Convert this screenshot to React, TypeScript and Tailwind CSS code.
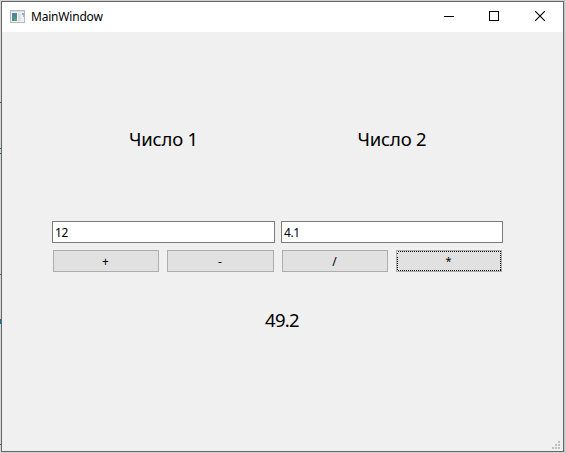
import type { ReactNode } from "react";

function AppIcon() {
  return (
    <svg width="15" height="13" viewBox="0 0 15 13" shapeRendering="crispEdges">
      <rect width="15" height="13" fill="#b4b8bf" />
      <rect x="1" y="1" width="13" height="1" fill="#d8dbe0" />
      <rect x="1" y="2" width="13" height="10" fill="#f1f1f1" />
      <rect x="2" y="3" width="5" height="8" fill="#4a8f94" />
      <rect x="2" y="3" width="3" height="3" fill="#4f82a8" />
      <rect x="4" y="8" width="3" height="3" fill="#5aa27c" />
      <rect x="8" y="3" width="3" height="8" fill="#e0e0e0" />
      <rect x="12" y="3" width="2" height="2" fill="#8fb3c4" />
      <rect x="13" y="5" width="1" height="2" fill="#8bbfae" />
    </svg>
  );
}

function TitleBar() {
  return (
    <header className="flex h-[30px] bg-white pl-2">
      <div className="flex items-center pb-px">
        <AppIcon />
      </div>
      <span className="ml-[6px] text-[12px] leading-[30px] tracking-[-0.2px]">MainWindow</span>
      <div className="ml-auto flex">
        <span className="flex h-[28px] w-[44px] items-center justify-center">
          <svg width="10" height="10" viewBox="0 0 10 10" shapeRendering="crispEdges">
            <rect y="5" width="10" height="1" fill="#000" />
          </svg>
        </span>
        <span className="flex h-[28px] w-[46px] items-center justify-center">
          <svg width="10" height="10" viewBox="0 0 10 10" shapeRendering="crispEdges">
            <rect x="0.5" y="0.5" width="9" height="9" fill="none" stroke="#000" />
          </svg>
        </span>
        <span className="flex h-[28px] w-[46px] items-center justify-center">
          <svg width="10" height="10" viewBox="0 0 10 10">
            <path d="M0 0L10 10M10 0L0 10" stroke="#000" strokeWidth="1.1" />
          </svg>
        </span>
      </div>
    </header>
  );
}

function Field({ value }: { value: string }) {
  return (
    <div className="h-[22px] border border-[#7a7a7a] bg-white pt-[3px] pl-[2px] text-[12px] leading-4 tracking-[-0.4px]">
      {value}
    </div>
  );
}

function OpButton({ children, focused = false }: { children: ReactNode; focused?: boolean }) {
  return (
    <div className="flex h-[22px] border border-[#adadad] bg-[#e1e1e1] text-[12px] leading-4">
      {focused ? (
        <div className="relative flex flex-1 justify-center pt-[2px] pr-px text-[11px]">
          <svg className="absolute inset-0" width="104" height="20" shapeRendering="crispEdges">
            <rect x="0.5" y="0.5" width="103" height="19" fill="none" stroke="#000" strokeDasharray="1 1" />
          </svg>
          {children}
        </div>
      ) : (
        <div className="flex flex-1 justify-center pt-[3px] pr-px">{children}</div>
      )}
    </div>
  );
}

function SizeGrip() {
  return (
    <svg width="8" height="8" viewBox="0 0 8 8" fill="#bfbfbf" shapeRendering="crispEdges">
      <rect x="6" y="0" width="2" height="2" />
      <rect x="3" y="3" width="2" height="2" />
      <rect x="6" y="3" width="2" height="2" />
      <rect x="0" y="6" width="2" height="2" />
      <rect x="3" y="6" width="2" height="2" />
      <rect x="6" y="6" width="2" height="2" />
    </svg>
  );
}

function DesktopEdge() {
  return (
    <svg width="1" height="453" shapeRendering="crispEdges">
      <rect width="1" height="453" fill="#d6d6d6" />
      <g fill="#0e78b0">
        <rect y="102" width="1" height="1" />
        <rect y="148" width="1" height="1" />
        <rect y="153" width="1" height="1" />
        <rect y="274" width="1" height="1" />
        <rect y="319" width="1" height="5" />
        <rect y="444" width="1" height="1" />
      </g>
    </svg>
  );
}

export default function App() {
  return (
    <div className="flex h-[453px] w-[566px] overflow-hidden bg-[#d3d3d3] font-['Noto_Sans','Open_Sans',sans-serif] text-black">
      <DesktopEdge />
      <div className="mt-px flex h-[451px] w-[563px] flex-col border border-[#656565] bg-[#f0f0f0]">
        <TitleBar />
        <main className="flex flex-1 flex-col pl-[50px]">
          <div className="mt-[93px] grid h-[28px] grid-cols-[223px_222px] gap-[6px] text-center text-[18.5px] leading-7 tracking-[-0.2px]">
            <span>Число 1</span>
            <span>Число 2</span>
          </div>
          <div className="mt-[68px] grid grid-cols-[223px_222px] gap-[6px]">
            <Field value="12" />
            <Field value="4.1" />
          </div>
          <div className="mt-[7px] ml-px grid grid-cols-[106px_107px_106px_106px] gap-2">
            <OpButton>+</OpButton>
            <OpButton>-</OpButton>
            <OpButton>/</OpButton>
            <OpButton focused>*</OpButton>
          </div>
          <div className="mt-[34px] w-[460px] text-center text-[18.5px] leading-7 tracking-[-0.7px]">49.2</div>
          <div className="mt-auto flex justify-end pr-[3px] pb-[2px]">
            <SizeGrip />
          </div>
        </main>
      </div>
      <div className="flex-1 bg-linear-to-r from-[#bcbcbc] to-[#dadada]" />
    </div>
  );
}
